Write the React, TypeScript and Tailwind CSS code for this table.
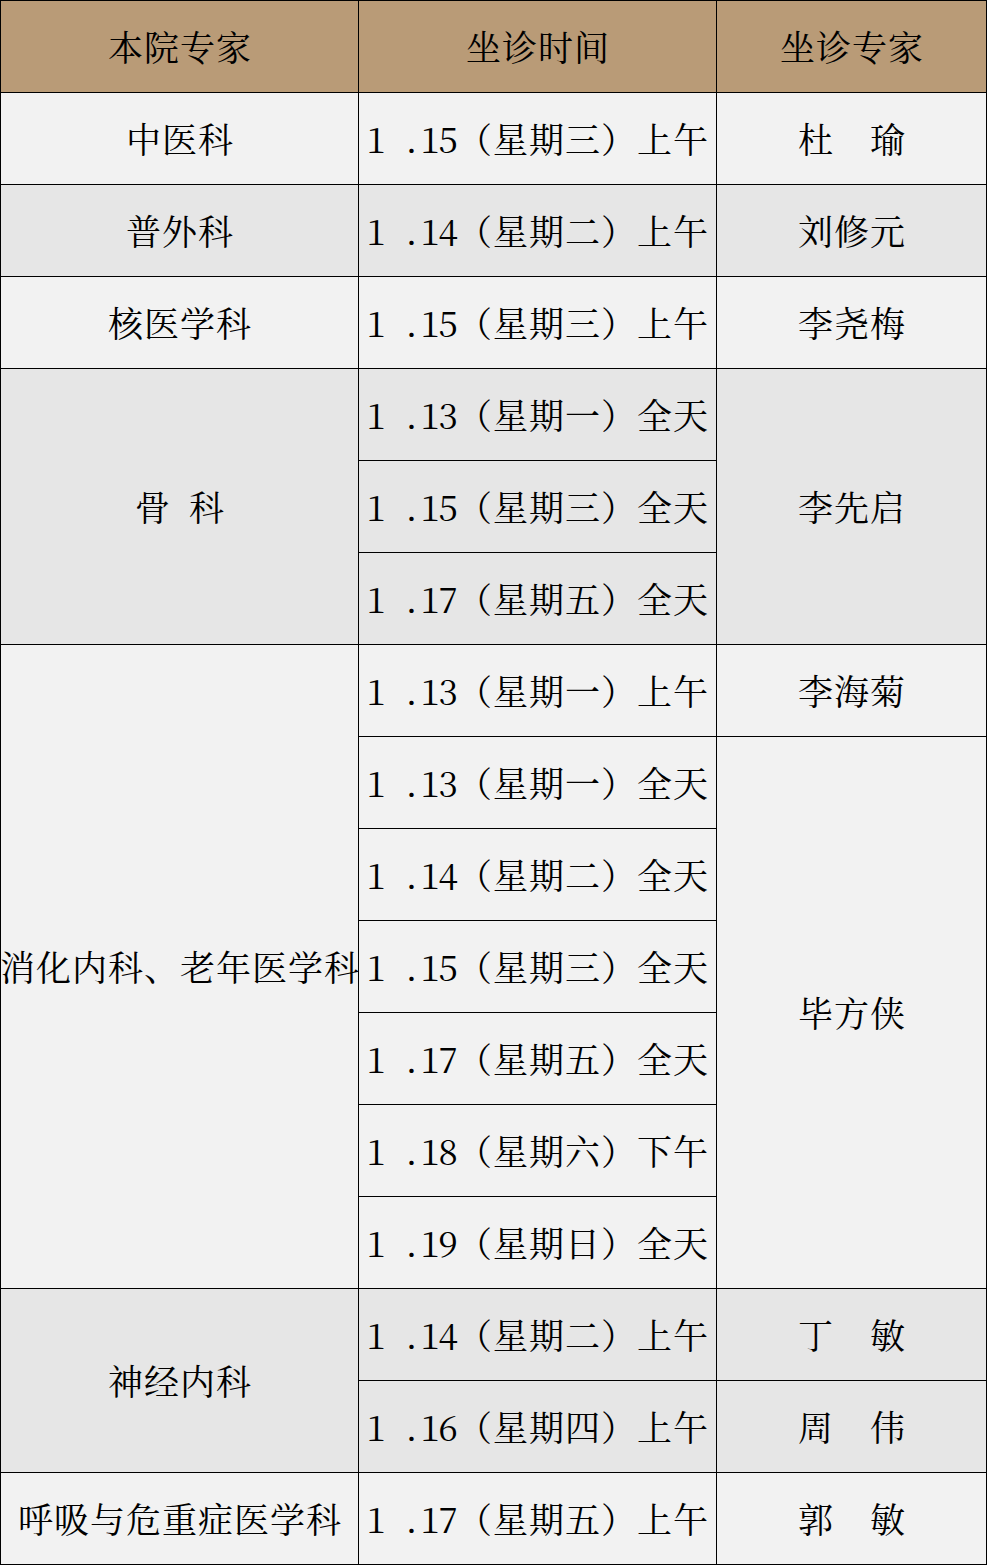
const font = {
  fontFamily:
    '"Noto Serif CJK SC", "Liberation Serif", "Noto Sans CJK SC", serif',
};

type Row = {
  dept?: string;
  deptSpan?: number;
  date: string;
  doc?: string;
  docSpan?: number;
  tone: 'light' | 'gray';
};

const rows: Row[] = [
  { dept: '中医科', date: '1 .15（星期三）上午', doc: '杜　瑜', tone: 'light' },
  { dept: '普外科', date: '1 .14（星期二）上午', doc: '刘修元', tone: 'gray' },
  { dept: '核医学科', date: '1 .15（星期三）上午', doc: '李尧梅', tone: 'light' },
  { dept: '骨 科', deptSpan: 3, date: '1 .13（星期一）全天', doc: '李先启', docSpan: 3, tone: 'gray' },
  { date: '1 .15（星期三）全天', tone: 'gray' },
  { date: '1 .17（星期五）全天', tone: 'gray' },
  { dept: '消化内科、老年医学科', deptSpan: 7, date: '1 .13（星期一）上午', doc: '李海菊', tone: 'light' },
  { date: '1 .13（星期一）全天', doc: '毕方侠', docSpan: 6, tone: 'light' },
  { date: '1 .14（星期二）全天', tone: 'light' },
  { date: '1 .15（星期三）全天', tone: 'light' },
  { date: '1 .17（星期五）全天', tone: 'light' },
  { date: '1 .18（星期六）下午', tone: 'light' },
  { date: '1 .19（星期日）全天', tone: 'light' },
  { dept: '神经内科', deptSpan: 2, date: '1 .14（星期二）上午', doc: '丁　敏', tone: 'gray' },
  { date: '1 .16（星期四）上午', doc: '周　伟', tone: 'gray' },
  { dept: '呼吸与危重症医学科', date: '1 .17（星期五）上午', doc: '郭　敏', tone: 'light' },
];

const spanClass: Record<number, string> = {
  1: '',
  2: 'row-span-2',
  3: 'row-span-3',
  6: 'row-span-6',
  7: 'row-span-7',
};

// ascii chars take half a cell like in SimSun
function Text({ value }: { value: string }) {
  return (
    <span className="whitespace-nowrap">
      {value.split('').map((c, i) =>
        c.charCodeAt(0) < 128 ? (
          <span key={i} className="inline-block w-[18px] text-center">
            {c === ' ' ? '\u00a0' : c}
          </span>
        ) : (
          <span key={i} className="inline-block w-[36px] text-center">
            {c === '　' ? '\u00a0' : c}
          </span>
        )
      )}
    </span>
  );
}

function Cell({ children, tone, span = 1 }: { children: React.ReactNode; tone: string; span?: number }) {
  return (
    <div
      className={`flex items-center justify-center overflow-visible text-[35px] leading-none text-black ${
        tone === 'gray' ? 'bg-[#e6e6e6]' : 'bg-[#f2f2f2]'
      } ${spanClass[span]}`}
    >
      {children}
    </div>
  );
}

export default function App() {
  return (
    <div
      className="grid w-[987px] grid-cols-[357px_357px_269px] auto-rows-[91px] gap-px bg-black p-px"
      style={font}
    >
      {['本院专家', '坐诊时间', '坐诊专家'].map((h) => (
        <div key={h} className="flex items-center justify-center bg-[#b99b77] text-[35px] leading-none text-black">
          <Text value={h} />
        </div>
      ))}
      {rows.map((r, i) => [
        r.dept && (
          <Cell key={`d${i}`} tone={r.tone} span={r.deptSpan}>
            <Text value={r.dept} />
          </Cell>
        ),
        <Cell key={`t${i}`} tone={r.tone}>
          <Text value={r.date} />
        </Cell>,
        r.doc && (
          <Cell key={`n${i}`} tone={r.tone} span={r.docSpan}>
            <Text value={r.doc} />
          </Cell>
        ),
      ])}
    </div>
  );
}
